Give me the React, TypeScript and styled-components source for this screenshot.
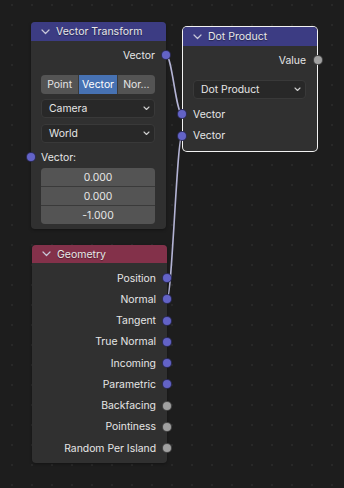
import styled, { createGlobalStyle } from "styled-components";

const GlobalStyle = createGlobalStyle`
  html, body {
    margin: 0;
    padding: 0;
    background: #1d1d1d;
  }
  * {
    box-sizing: border-box;
  }
`;

const colors = {
  canvas: "#1d1d1d",
  dot: "#282828",
  body: "#303030",
  text: "#e6e6e6",
  vectorHeader: "#3c3c83",
  geometryHeader: "#83314a",
  field: "#545454",
  fieldLine: "#3a3a3a",
  selected: "#4772b3",
  dropdown: "#282828",
  vectorSocket: "#6363c7",
  floatSocket: "#a1a1a1",
  link: "#b3b3d4",
};

const Canvas = styled.div`
  position: relative;
  width: 344px;
  height: 488px;
  overflow: hidden;
  background-color: ${colors.canvas};
  background-image: radial-gradient(circle, ${colors.dot} 1px, transparent 1.3px);
  background-size: 20px 20px;
  background-position: 2px 15px;
  font-family: Inter, "Noto Sans", sans-serif;
  font-size: 10.4px;
  color: ${colors.text};
`;

const Links = styled.svg`
  position: absolute;
  inset: 0;
  pointer-events: none;
`;

const Node = styled.div<{ $x: number; $y: number; $w: number; $selected?: boolean }>`
  position: absolute;
  left: ${(p) => p.$x}px;
  top: ${(p) => p.$y}px;
  width: ${(p) => p.$w}px;
  background: ${colors.body};
  border-radius: 4px;
  display: flex;
  flex-direction: column;
  box-shadow: ${(p) =>
    p.$selected ? "0 0 0 1px #f2f2f2" : "0 1px 3px rgba(0, 0, 0, 0.35)"};
`;

const Header = styled.div<{ $color: string; $h: number }>`
  height: ${(p) => p.$h}px;
  background: ${(p) => p.$color};
  border-radius: 4px 4px 0 0;
  display: flex;
  align-items: center;
  gap: 6px;
  padding-left: 10px;
  font-size: 10.5px;
  color: #e8e8e8;
  text-shadow: 0 1px 1px rgba(0, 0, 0, 0.4);
`;

const Body = styled.div<{ $pt: number; $pb: number }>`
  display: flex;
  flex-direction: column;
  padding: ${(p) => p.$pt}px 11px ${(p) => p.$pb}px 10px;
`;

const SocketRow = styled.div<{ $h: number; $out?: boolean; $mt?: number }>`
  position: relative;
  height: ${(p) => p.$h}px;
  margin-top: ${(p) => p.$mt ?? 0}px;
  display: flex;
  align-items: center;
  justify-content: ${(p) => (p.$out ? "flex-end" : "flex-start")};
  white-space: nowrap;
`;

const Socket = styled.span<{ $kind: "vector" | "float"; $out?: boolean; $edge: number }>`
  position: absolute;
  top: 50%;
  ${(p) => (p.$out ? "right" : "left")}: ${(p) => -p.$edge - 5}px;
  width: 10px;
  height: 10px;
  margin-top: -5px;
  border-radius: 50%;
  background: ${(p) => (p.$kind === "vector" ? colors.vectorSocket : colors.floatSocket)};
  border: 1px solid rgba(0, 0, 0, 0.55);
`;

const Segmented = styled.div<{ $mt: number }>`
  margin-top: ${(p) => p.$mt}px;
  height: 19px;
  display: grid;
  grid-template-columns: 1fr 1fr 1fr;
  gap: 1px;
  background: ${colors.fieldLine};
  border-radius: 4px;
  overflow: hidden;
`;

const Segment = styled.div<{ $active?: boolean }>`
  background: ${(p) => (p.$active ? colors.selected : colors.field)};
  display: flex;
  align-items: center;
  justify-content: center;
  color: ${(p) => (p.$active ? "#ffffff" : colors.text)};
  white-space: nowrap;
`;

const Dropdown = styled.div<{ $mt: number }>`
  margin-top: ${(p) => p.$mt}px;
  height: 19px;
  background: ${colors.dropdown};
  border: 1px solid #393939;
  border-radius: 4px;
  display: flex;
  align-items: center;
  justify-content: space-between;
  padding: 0 4px 0 7px;
`;

const FieldStack = styled.div<{ $mt: number }>`
  margin-top: ${(p) => p.$mt}px;
  display: flex;
  flex-direction: column;
  gap: 1px;
  background: ${colors.fieldLine};
  border-radius: 4px;
  overflow: hidden;
`;

const Field = styled.div`
  height: 18px;
  background: ${colors.field};
  display: flex;
  align-items: center;
  justify-content: center;
`;

const Chevron = () => (
  <svg width="9" height="6" viewBox="0 0 9 6">
    <polyline
      points="1,1 4.5,4.5 8,1"
      fill="none"
      stroke="#c8c8d8"
      strokeWidth="1.2"
      strokeLinecap="round"
      strokeLinejoin="round"
    />
  </svg>
);

const SmallChevron = () => (
  <svg width="7" height="5" viewBox="0 0 7 5">
    <polyline
      points="1,1 3.5,3.5 6,1"
      fill="none"
      stroke="#d0d0d0"
      strokeWidth="1.1"
      strokeLinecap="round"
      strokeLinejoin="round"
    />
  </svg>
);

const geometryOutputs: { label: string; kind: "vector" | "float" }[] = [
  { label: "Position", kind: "vector" },
  { label: "Normal", kind: "vector" },
  { label: "Tangent", kind: "vector" },
  { label: "True Normal", kind: "vector" },
  { label: "Incoming", kind: "vector" },
  { label: "Parametric", kind: "vector" },
  { label: "Backfacing", kind: "float" },
  { label: "Pointiness", kind: "float" },
  { label: "Random Per Island", kind: "float" },
];

export default function App() {
  return (
    <>
      <GlobalStyle />
      <Canvas>
        <Links width="344" height="488">
          <path
            d="M166 55 C172 55 176 114 182 114"
            fill="none"
            stroke={colors.link}
            strokeWidth="1.6"
          />
          <path
            d="M167 299 C172 299 177 135 182 135"
            fill="none"
            stroke={colors.link}
            strokeWidth="1.6"
          />
        </Links>

        <Node $x={31} $y={22} $w={135}>
          <Header $color={colors.vectorHeader} $h={19}>
            <Chevron />
            Vector Transform
          </Header>
          <Body $pt={3} $pb={5}>
            <SocketRow $h={22} $out>
              Vector
              <Socket $kind="vector" $out $edge={11} />
            </SocketRow>
            <Segmented $mt={9}>
              <Segment>Point</Segment>
              <Segment $active>Vector</Segment>
              <Segment>Nor...</Segment>
            </Segmented>
            <Dropdown $mt={5}>
              Camera
              <SmallChevron />
            </Dropdown>
            <Dropdown $mt={6}>
              World
              <SmallChevron />
            </Dropdown>
            <SocketRow $h={20} $mt={4}>
              Vector:
              <Socket $kind="vector" $edge={10} />
            </SocketRow>
            <FieldStack $mt={1}>
              <Field>0.000</Field>
              <Field>0.000</Field>
              <Field>-1.000</Field>
            </FieldStack>
          </Body>
        </Node>

        <Node $x={183} $y={27} $w={134} $selected>
          <Header $color={colors.vectorHeader} $h={19}>
            <Chevron />
            Dot Product
          </Header>
          <Body $pt={3} $pb={5}>
            <SocketRow $h={22} $out>
              Value
              <Socket $kind="float" $out $edge={12} />
            </SocketRow>
            <Dropdown $mt={9}>
              Dot Product
              <SmallChevron />
            </Dropdown>
            <SocketRow $h={22} $mt={4}>
              Vector
              <Socket $kind="vector" $edge={11} />
            </SocketRow>
            <SocketRow $h={21}>
              Vector
              <Socket $kind="vector" $edge={11} />
            </SocketRow>
          </Body>
        </Node>

        <Node $x={32} $y={245} $w={135}>
          <Header $color={colors.geometryHeader} $h={18}>
            <Chevron />
            Geometry
          </Header>
          <Body $pt={4.4} $pb={4.4}>
            {geometryOutputs.map((o) => (
              <SocketRow key={o.label} $h={21.25} $out>
                {o.label}
                <Socket $kind={o.kind} $out $edge={11} />
              </SocketRow>
            ))}
          </Body>
        </Node>
      </Canvas>
    </>
  );
}
